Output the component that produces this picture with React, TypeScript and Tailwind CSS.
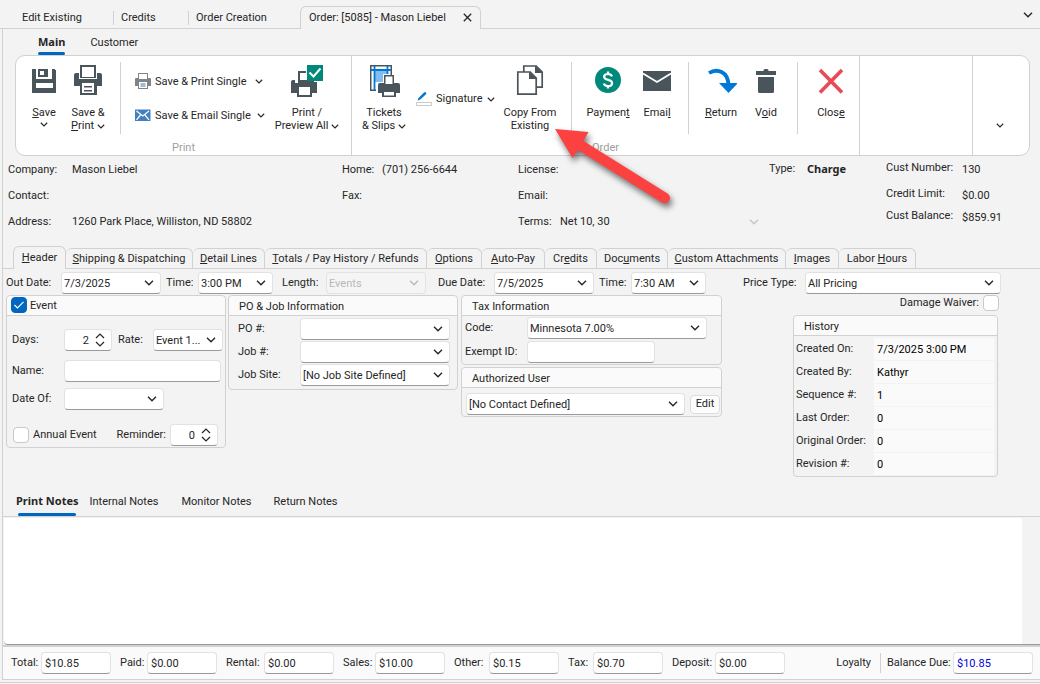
import { useId, useState, type ReactNode } from "react";

const DARK = "#4a545b";

function Chevron({ className = "" }: { className?: string }) {
  return (
    <svg viewBox="0 0 10 6" className={`shrink-0 ${className}`} fill="none" stroke="currentColor" strokeWidth="1.4" aria-hidden>
      <path d="M1 0.8 5 4.8 9 0.8" />
    </svg>
  );
}

/* ---------- ribbon icons ---------- */

function SaveIcon() {
  return (
    <svg width="32" height="32" viewBox="0 0 32 32" aria-hidden>
      <path fill={DARK} d="M4 4h24v24H4z" />
      <path fill="#fff" d="M8 4h16v10H8zM8 18h17v5H8zM27 4h1v1h-1z" />
      <path fill={DARK} d="M10 4h10v8H10z" />
      <path fill="#fff" d="M12 6h4v4h-4z" />
    </svg>
  );
}

function PrinterIcon() {
  return (
    <svg width="32" height="32" viewBox="0 0 32 32" aria-hidden>
      <path fill={DARK} d="M8 0h16v8h4a2 2 0 0 1 2 2v11h-5v9H8v-9H2V10a2 2 0 0 1 2-2h4z" />
      <path fill="#fff" d="M10 2h12v10H10zM10 18h12v10H10zM7 8h1v5h16V8h1v6H7z" />
      <path fill={DARK} d="M12 21h8v1.600h-8zM12 25h8v1.600h-8z" />
    </svg>
  );
}

function PrintPreviewIcon() {
  return (
    <svg width="32" height="32" viewBox="0 0 32 32" aria-hidden>
      <path fill={DARK} d="M7 6h8v2H9v7h14v2h3v11h-5v4H6v-4H0V17a2 2 0 0 1 2-2h2v3h3z" />
      <path fill="#fff" d="M8 22h11v8H8z" />
      <path fill="#00897a" d="M16 0h16v16H16z" />
      <path stroke="#fff" strokeWidth="2" fill="none" d="m18.500 7.500 4 4 7-8" />
    </svg>
  );
}

function TicketsIcon() {
  return (
    <svg width="32" height="32" viewBox="0 0 32 32" aria-hidden>
      <path fill={DARK} d="M2 0h22v10h-1.500V1.500h-19v23H8V26H2z" />
      <path fill="#83bdee" d="M7 6h12v3h-4v8H7z" />
      <path stroke="#0078d7" strokeWidth="1.800" fill="none" d="M3 5h20M6.500 1v24M19.500 1v8" />
      <path fill={DARK} d="M16 10h10v8h4a2 2 0 0 1 2 2v8h-4v4H14v-4h-4v-8a2 2 0 0 1 2-2h4z" />
      <path fill="#fff" d="M17.500 11.500h7V19h-7zM16 27h10v3.500H16z" />
    </svg>
  );
}

function CopyIcon() {
  return (
    <svg width="32" height="32" viewBox="0 0 32 32" aria-hidden>
      <g fill="#fff" stroke={DARK} strokeWidth="1.700">
        <path d="M9.800 1h12.400l6 6v15.200H9.800z" />
        <path d="M3.800 7h12.400l6 6v16.200H3.800z" />
      </g>
      <path fill={DARK} d="M15 6.500 22.800 14H15zM21 .500 28.800 8H21z" />
    </svg>
  );
}

function PaymentIcon() {
  return (
    <svg width="32" height="32" viewBox="0 0 32 32" aria-hidden>
      <circle cx="16" cy="15" r="13" fill="#00897a" />
      <path
        fill="none"
        stroke="#fff"
        strokeWidth="2.200"
        d="M20 11.300c-.6-1.500-2-2.300-4-2.300-2.300 0-3.900 1-3.900 2.800 0 4.200 8 2 8 6.200 0 2-1.700 3.100-4.100 3.100-2.200 0-3.700-.9-4.200-2.600M16 6.500V9m0 12v2.500"
      />
    </svg>
  );
}

function EnvelopeIcon() {
  return (
    <svg width="32" height="32" viewBox="0 0 32 32" aria-hidden>
      <path fill={DARK} d="M2 6h28v20H2z" />
      <path fill="none" stroke="#fff" strokeWidth="1.800" d="m2 8.500 14 8.500 14-8.500" />
    </svg>
  );
}

function ReturnIcon() {
  return (
    <svg width="32" height="32" viewBox="0 0 32 32" aria-hidden>
      <path fill="none" stroke="#0078d7" strokeWidth="3.800" d="M4 8C12 3 23 6.500 23.500 20" />
      <path fill="#0078d7" d="M14 18h19L23.500 28z" />
    </svg>
  );
}

function TrashIcon() {
  return (
    <svg width="32" height="32" viewBox="0 0 32 32" aria-hidden>
      <path fill={DARK} d="M6 6h7.500V5.500a1.500 1.500 0 0 1 1.500-1.500h2a1.500 1.500 0 0 1 1.500 1.500V6H26v4H6zM8 12h16v14.500a1.500 1.500 0 0 1-1.500 1.500h-13A1.500 1.500 0 0 1 8 26.500z" />
    </svg>
  );
}

function CloseIcon() {
  return (
    <svg width="32" height="32" viewBox="0 0 32 32" aria-hidden>
      <path stroke="#e84a57" strokeWidth="3.600" d="m5 5 22 22.500M27 5 5 27.500" />
    </svg>
  );
}

function SmallPrinterIcon() {
  return (
    <svg width="16" height="16" viewBox="0 0 16 16" aria-hidden>
      <path fill="#7f8487" d="M3 0h10v5h2a1 1 0 0 1 1 1v7h-3v3H3v-3H0V6a1 1 0 0 1 1-1h2z" />
      <path fill="#fff" d="M4 1h8v5H4zM4 9h8v6H4z" />
      <path fill="#3f78b5" d="M5.500 10.500h5v1h-5zM5.500 12.500h5v1h-5z" />
    </svg>
  );
}

function SmallMailIcon() {
  return (
    <svg width="16" height="16" viewBox="0 0 16 16" aria-hidden>
      <path fill="#4480bf" d="M0 2.500h15.500v11.500H0z" />
      <path fill="none" stroke="#fff" strokeWidth="1.200" d="m1.500 4 6.300 5L14 4M1.500 12.800 5.500 8M14 12.800 10 8" />
    </svg>
  );
}

function PenIcon() {
  return (
    <svg width="16" height="16" viewBox="0 0 16 16" aria-hidden>
      <path fill="#0078d7" d="M1.500 9.500 2.500 7 8 1.500a1.300 1.300 0 0 1 2 1.800L4 8.800z" />
      <path fill="none" stroke="#c8c8c8" d="M.5 11.500h15v3H.5z" />
    </svg>
  );
}

/* ---------- ribbon ---------- */

function BigButton({ icon, className, children }: { icon: ReactNode; className: string; children: ReactNode }) {
  return (
    <button type="button" className={`flex shrink-0 flex-col items-center gap-[9px] pt-2 text-center leading-[13px] ${className}`}>
      {icon}
      <span>{children}</span>
    </button>
  );
}

function Divider() {
  return <span className="mt-[5px] h-[72px] w-px shrink-0 self-start bg-[#d1d1d1]" />;
}

function RibbonGroup({ caption, children }: { caption: string; children: ReactNode }) {
  return (
    <div className="flex shrink-0 flex-col border-r border-[#d1d1d1]">
      <div className="flex h-[85px] px-1 pt-px">{children}</div>
      <span className="text-center leading-[13px] text-[#a0a0a0]">{caption}</span>
    </div>
  );
}

function Ribbon() {
  return (
    <div className="mr-[10px] ml-3 flex h-[101px] rounded-[10px] border border-[#d1d1d1] bg-white">
      <RibbonGroup caption="Print">
        <BigButton icon={<SaveIcon />} className="w-12">
          <u>S</u>ave
          <Chevron className="mx-auto mt-[3px] h-[5px] w-2" />
        </BigButton>
        <BigButton icon={<PrinterIcon />} className="w-10 whitespace-nowrap">
          Save &amp;
          <br />
          <u>P</u>rint <Chevron className="inline h-[5px] w-2" />
        </BigButton>
        <span className="w-3" />
        <Divider />
        <div className="flex w-[148px] flex-col justify-start gap-[18px] pt-4 pl-[14px]">
          <button type="button" className="flex h-4 items-center gap-1 whitespace-nowrap">
            <SmallPrinterIcon /> <span className="pt-px">Save &amp; Print Single</span>
            <Chevron className="mr-[6px] ml-auto h-[5px] w-2" />
          </button>
          <button type="button" className="flex h-4 items-center gap-1 whitespace-nowrap">
            <SmallMailIcon /> <span className="pt-px">Save &amp; Email Single</span>
            <Chevron className="mr-1 ml-auto h-[5px] w-2" />
          </button>
        </div>
        <BigButton icon={<PrintPreviewIcon />} className="ml-px mr-[3px] w-[74px] whitespace-nowrap">
          Print /<br />
          Preview All <Chevron className="inline h-[5px] w-2" />
        </BigButton>
      </RibbonGroup>

      <RibbonGroup caption="Order">
        <BigButton icon={<TicketsIcon />} className="w-[56px] whitespace-nowrap">
          Tickets
          <br />
          &amp; Slips <Chevron className="inline h-[5px] w-2" />
        </BigButton>
        <button type="button" className="mt-[34px] ml-1 flex h-4 w-[79px] items-center gap-1">
          <PenIcon /> Signature <Chevron className="ml-auto h-[5px] w-2" />
        </button>
        <BigButton icon={<CopyIcon />} className="ml-px w-[68px]">
          Copy From Existing
        </BigButton>
        <span className="w-[7px]" />
        <Divider />
        <BigButton icon={<PaymentIcon />} className="ml-2 w-[56px]">
          Paymen<u>t</u>
        </BigButton>
        <BigButton icon={<EnvelopeIcon />} className="mr-[10px] w-[42px]">
          Emai<u>l</u>
        </BigButton>
        <Divider />
        <BigButton icon={<ReturnIcon />} className="ml-2 w-[48px]">
          <u>R</u>eturn
        </BigButton>
        <BigButton icon={<TrashIcon />} className="mr-[10px] w-[42px]">
          V<u>o</u>id
        </BigButton>
        <Divider />
        <BigButton icon={<CloseIcon />} className="ml-[9px] w-[48px]">
          Clos<u>e</u>
        </BigButton>
      </RibbonGroup>

      <div className="flex-1 border-r border-[#d1d1d1]" />
      <button type="button" aria-label="Expand ribbon" className="flex w-14 shrink-0 items-center justify-center pt-10 pr-[2px]">
        <Chevron className="h-[5px] w-2" />
      </button>
    </div>
  );
}

/* ---------- form controls ---------- */

const FIELD = "h-[22px] w-full rounded-[4px] border border-[#e2e2e2] border-b-[#9a9a9a] bg-white pt-px";

function Combo({
  label,
  value,
  className,
  labelClass = "",
  hideLabel,
  disabled,
}: {
  label: string;
  value: string;
  className: string;
  labelClass?: string;
  hideLabel?: boolean;
  disabled?: boolean;
}) {
  const id = useId();
  return (
    <div className="flex shrink-0 items-center">
      {!hideLabel && (
        <label htmlFor={id} className={`whitespace-nowrap ${labelClass}`}>
          {label}
        </label>
      )}
      <span className={`relative ${className}`}>
        <select
          id={id}
          disabled={disabled}
          aria-label={hideLabel ? label : undefined}
          className={`appearance-none truncate pr-[18px] pl-[2px] ${FIELD} disabled:border-[#e2e2e2] disabled:bg-[#f5f5f5] disabled:text-[#b8b8b8]`}
        >
          <option>{value}</option>
        </select>
        <Chevron className={`pointer-events-none absolute top-2 right-[7px] h-[6px] w-[10px] ${disabled ? "text-[#b8b8b8]" : ""}`} />
      </span>
    </div>
  );
}

function Text({ label, value, className, labelClass }: { label: string; value: string; className: string; labelClass: string }) {
  const id = useId();
  return (
    <div className="flex shrink-0 items-center">
      <label htmlFor={id} className={`whitespace-nowrap ${labelClass}`}>
        {label}
      </label>
      <span className={className}>
        <input id={id} defaultValue={value} className={`px-[3px] ${FIELD}`} />
      </span>
    </div>
  );
}

function Spinner({ label, value, labelClass }: { label: string; value: string; labelClass: string }) {
  const id = useId();
  return (
    <div className="flex shrink-0 items-center">
      <label htmlFor={id} className={`whitespace-nowrap ${labelClass}`}>
        {label}
      </label>
      <span className="relative w-12">
        <input id={id} defaultValue={value} className={`pr-[22px] text-right ${FIELD}`} />
        <svg viewBox="0 0 10 14" className="pointer-events-none absolute top-1 right-[7px] h-[14px] w-[10px]" fill="none" stroke="currentColor" strokeWidth="1.200" aria-hidden>
          <path d="M1 5 5 1l4 4M1 9l4 4 4-4" />
        </svg>
      </span>
    </div>
  );
}

const BOX =
  "size-4 shrink-0 appearance-none rounded-[4px] border border-[#c9c9c9] bg-white checked:border-[#0067c0] checked:bg-[#0067c0]";

function Panel({ title, className, children }: { title: ReactNode; className: string; children: ReactNode }) {
  return (
    <section className={`rounded-[4px] border border-[#d1d1d1] ${className}`}>
      <div className="flex h-5 items-center rounded-t-[4px] border-b border-[#d1d1d1] bg-[#fafafa]">{title}</div>
      {children}
    </section>
  );
}

function PanelTitle({ children }: { children: ReactNode }) {
  return <h3 className="pt-[2px] pl-[10px]">{children}</h3>;
}

/* ---------- sections ---------- */

function DocumentTabs() {
  return (
    <nav className="flex h-[29px] items-end border-b border-[#d1d1d1] pl-[14px]">
      <button type="button" className="mb-[3px] h-[14px] w-[100px] border-r border-[#d1d1d1] pl-2 text-left">Edit Existing</button>
      <button type="button" className="mb-[3px] h-[14px] w-[75px] border-r border-[#d1d1d1] pl-[7px] text-left">Credits</button>
      <button type="button" className="mb-[3px] h-[14px] w-[111px] pl-[7px] text-left">Order Creation</button>
      <div className="-mb-px flex h-[23px] w-[181px] items-center justify-between rounded-t-[6px] border border-b-0 border-[#d1d1d1] bg-[#f3f3f3] pr-2 pb-px pl-2">
        <button type="button" className="pt-px whitespace-nowrap">Order: [5085] - Mason Liebel</button>
        <button type="button" aria-label="Close tab">
          <svg width="9" height="9" viewBox="0 0 9 9" stroke="currentColor" strokeWidth="1.300" aria-hidden>
            <path d="m.8.800 7.400 7.400M8.200.800.800 8.200" />
          </svg>
        </button>
      </div>
      <button type="button" aria-label="Window list" className="mr-[7px] mb-[10px] ml-auto">
        <Chevron className="h-[6px] w-[10px]" />
      </button>
    </nav>
  );
}

function CustomerInfo() {
  return (
    <section className="grid grid-cols-[334fr_176fr_251fr_117fr_154fr] pl-[5px]">
      <dl className="grid auto-rows-[26px] grid-cols-[64px_1fr] items-center pt-px">
        <dt>Company:</dt>
        <dd>Mason Liebel</dd>
        <dt>Contact:</dt>
        <dd />
        <dt>Address:</dt>
        <dd>1260 Park Place, Williston, ND 58802</dd>
      </dl>
      <dl className="grid auto-rows-[26px] grid-cols-[40px_1fr] items-center pt-px">
        <dt>Home:</dt>
        <dd>(701) 256-6644</dd>
        <dt>Fax:</dt>
        <dd />
      </dl>
      <dl className="grid auto-rows-[26px] grid-cols-[42px_1fr] items-center pt-px">
        <dt>License:</dt>
        <dd />
        <dt>Email:</dt>
        <dd />
        <dt>Terms:</dt>
        <dd className="flex items-center justify-between pr-[10px]">
          Net 10, 30 <Chevron className="h-[6px] w-[10px] text-[#c4c4c4]" />
        </dd>
      </dl>
      <dl className="grid auto-rows-[26px] grid-cols-[38px_1fr] items-center">
        <dt>Type:</dt>
        <dd className="font-['Noto_Sans'] font-bold">Charge</dd>
      </dl>
      <dl className="grid grid-cols-[76px_1fr] grid-rows-[24px_28px_16px] items-center">
        <dt>Cust Number:</dt>
        <dd className="pt-[3px]">130</dd>
        <dt>Credit Limit:</dt>
        <dd className="pt-[3px]">$0.00</dd>
        <dt>Cust Balance:</dt>
        <dd className="pt-[3px]">$859.91</dd>
      </dl>
    </section>
  );
}

const PAGES: { key: string; label: ReactNode; width: string }[] = [
  { key: "shipping", label: <><u>S</u>hipping &amp; Dispatching</>, width: "w-[127px]" },
  { key: "detail", label: <><u>D</u>etail Lines</>, width: "w-[72px]" },
  { key: "totals", label: <><u>T</u>otals / Pay History / Refunds</>, width: "w-[162px]" },
  { key: "options", label: <><u>O</u>ptions</>, width: "w-[55px]" },
  { key: "autopay", label: <><u>A</u>uto-Pay</>, width: "w-[63px]" },
  { key: "credits", label: <>Cr<u>e</u>dits</>, width: "w-[52px]" },
  { key: "documents", label: <>Doc<u>u</u>ments</>, width: "w-[71px]" },
  { key: "custom", label: <><u>C</u>ustom Attachments</>, width: "w-[118px]" },
  { key: "images", label: <><u>I</u>mages</>, width: "w-[53px]" },
  { key: "labor", label: <>Labor <u>H</u>ours</>, width: "w-[77px]" },
];

function PageTabs() {
  return (
    <nav className="mt-[11px] flex items-end border-b border-[#d1d1d1] pl-[10px]">
      <button type="button" className="-mb-px h-[23px] w-[53px] shrink-0 rounded-t-[6px] border border-b-0 border-[#d1d1d1] bg-[#f3f3f3]">
        <u>H</u>eader
      </button>
      {PAGES.map((page) => (
        <button
          key={page.key}
          type="button"
          className={`h-5 shrink-0 rounded-t-[6px] border-t border-r border-[#d1d1d1] whitespace-nowrap ${page.width}`}
        >
          {page.label}
        </button>
      ))}
    </nav>
  );
}

function EventPanel() {
  const [enabled, setEnabled] = useState(true);
  const [annual, setAnnual] = useState(false);
  return (
    <Panel
      className="w-[220px] shrink-0 pb-px"
      title={
        <label className="relative flex items-center gap-[3px] pb-px pl-1">
          <input type="checkbox" checked={enabled} onChange={() => setEnabled(!enabled)} className={BOX} />
          {enabled && (
            <svg className="pointer-events-none absolute left-[7px]" width="10" height="8" viewBox="0 0 10 8" fill="none" stroke="#fff" strokeWidth="1.200" aria-hidden>
              <path d="m.5 4 3 3 6-6.200" />
            </svg>
          )}
          <span className="pt-px">Event</span>
        </label>
      }
    >
      <div className="flex gap-[6px] pt-[13px] pl-[5px]">
        <Spinner label="Days:" value="2" labelClass="w-[52px]" />
        <Combo label="Rate:" value="Event 1..." labelClass="w-[35px]" className="w-[70px]" />
      </div>
      <div className="pt-[9px] pl-[5px]">
        <Text label="Name:" value="" labelClass="w-[52px]" className="w-[157px]" />
      </div>
      <div className="pt-[6px] pl-[5px]">
        <Combo label="Date Of:" value="" labelClass="w-[52px]" className="w-[100px]" />
      </div>
      <div className="flex items-center justify-between pt-[14px] pr-[7px] pl-[6px]">
        <label className="flex items-center gap-1">
          <input type="checkbox" checked={annual} onChange={() => setAnnual(!annual)} className={BOX} />
          Annual Event
        </label>
        <Spinner label="Reminder:" value="0" labelClass="pr-1" />
      </div>
    </Panel>
  );
}

const HISTORY = [
  ["Created On:", "7/3/2025 3:00 PM"],
  ["Created By:", "Kathyr"],
  ["Sequence #:", "1"],
  ["Last Order:", "0"],
  ["Original Order:", "0"],
  ["Revision #:", "0"],
];

function HeaderPage() {
  return (
    <div className="flex gap-[21px] pt-[3px] pl-[3px]">
      <div className="flex flex-col gap-px">
        <div className="flex">
          <Combo label="Out Date:" value="7/3/2025" labelClass="w-[55px]" className="mr-[5px] w-[100px]" />
          <Combo label="Time:" value="3:00 PM" labelClass="w-8" className="mr-[9px] w-[75px]" />
          <Combo label="Length:" value="Events" labelClass="w-11" className="mr-3 w-[100px]" disabled />
          <Combo label="Due Date:" value="7/5/2025" labelClass="w-14" className="mr-[5px] w-[100px]" />
          <Combo label="Time:" value="7:30 AM" labelClass="w-8" className="w-[75px]" />
        </div>
        <div className="flex items-start">
          <EventPanel />
          <Panel title={<PanelTitle>PO &amp; Job Information</PanelTitle>} className="ml-[2px] w-[230px] shrink-0 pb-[3px]">
            <div className="flex flex-col gap-px pt-[2px] pl-[9px]">
              <Combo label="PO #:" value="" labelClass="w-[62px]" className="w-[150px]" />
              <Combo label="Job #:" value="" labelClass="w-[62px]" className="w-[150px]" />
              <Combo label="Job Site:" value="[No Job Site Defined]" labelClass="w-[62px]" className="w-[150px]" />
            </div>
          </Panel>
          <div className="ml-[3px] flex w-[261px] shrink-0 flex-col gap-[2px]">
            <Panel title={<PanelTitle>Tax Information</PanelTitle>} className="pb-px">
              <div className="flex flex-col gap-[2px] pt-px pl-[3px]">
                <Combo label="Code:" value="Minnesota 7.00%" labelClass="w-[62px]" className="w-[180px]" />
                <Text label="Exempt ID:" value="" labelClass="w-[62px]" className="w-32" />
              </div>
            </Panel>
            <Panel title={<PanelTitle>Authorized User</PanelTitle>} className="pb-px">
              <div className="flex items-center gap-[5px] pt-[5px] pl-1">
                <Combo label="Authorized user" value="[No Contact Defined]" hideLabel className="w-[219px]" />
                <button type="button" className="h-[19px] w-[30px] rounded-[4px] border border-[#dcdcdc] bg-[#fdfdfd]">
                  Edit
                </button>
              </div>
            </Panel>
          </div>
        </div>
      </div>

      <div className="flex flex-col">
        <Combo label="Price Type:" value="All Pricing" labelClass="w-[62px]" className="w-[196px]" />
        <label className="mt-px mr-[2px] flex items-center justify-end gap-1">
          Damage Waiver:
          <input type="checkbox" className={BOX} />
        </label>
        <Panel title={<PanelTitle>History</PanelTitle>} className="mt-1 mr-[3px] ml-[50px]">
          <dl className="grid auto-rows-[23px] grid-cols-[78px_1fr] pt-[2px] pr-[3px] pl-[2px]">
            {HISTORY.map(([name, value]) => (
              <div key={name} className="contents">
                <dt className="pt-1">{name}</dt>
                <dd className="mb-px bg-[#fafafa] pt-[5px] pl-[3px] text-black">{value}</dd>
              </div>
            ))}
          </dl>
        </Panel>
      </div>
    </div>
  );
}

function Notes() {
  return (
    <section className="mt-[17px] flex flex-1 flex-col">
      <nav className="flex items-start border-b border-[#d1d1d1] pl-[13px]">
        <button type="button" className="mr-[11px] flex h-[22px] flex-col justify-between font-['Noto_Sans'] font-bold">
          Print Notes
          <span className="h-[3px] w-[58px] self-center rounded-full bg-[#0067c0]" />
        </button>
        <button type="button" className="mt-px mr-[23px]">Internal Notes</button>
        <button type="button" className="mt-px mr-[22px]">Monitor Notes</button>
        <button type="button" className="mt-px">Return Notes</button>
      </nav>
      <div className="mt-px ml-px flex min-h-24 flex-1 rounded-bl-[4px] border-b border-[#999] bg-white">
        <textarea aria-label="Print notes" className="flex-1 resize-none bg-transparent p-1 outline-none" />
        <span className="w-[18px] bg-[#f3f3f3]" />
      </div>
    </section>
  );
}

const TOTALS = [
  { label: "Total:", value: "$10.85", labelClass: "w-[30px]" },
  { label: "Paid:", value: "$0.00", labelClass: "w-[27px]" },
  { label: "Rental:", value: "$0.00", labelClass: "w-[38px]" },
  { label: "Sales:", value: "$10.00", labelClass: "w-[32px]" },
  { label: "Other:", value: "$0.15", labelClass: "w-[35px]" },
  { label: "Tax:", value: "$0.70", labelClass: "w-[25px]" },
  { label: "Deposit:", value: "$0.00", labelClass: "w-[43px]" },
];

function TotalsBar() {
  return (
    <footer className="flex items-center gap-[9px] border-t-2 border-b border-[#d1d1d1] bg-[#fafafa] py-[5px] pr-[7px] pl-2">
      {TOTALS.map((total) => (
        <Text key={total.label} label={total.label} value={total.value} labelClass={total.labelClass} className="w-[70px]" />
      ))}
      <span className="ml-auto">Loyalty</span>
      <span className="-mr-[3px] h-5 w-px bg-[#d1d1d1]" />
      <div className="text-[#0000e0] [&_label]:text-[#262626]">
        <Text label="Balance Due:" value="$10.85" labelClass="w-[66px]" className="w-20" />
      </div>
    </footer>
  );
}

function CalloutArrow() {
  return (
    <svg className="pointer-events-none absolute top-[115px] left-[540px]" width="150" height="100" viewBox="0 0 150 100" aria-hidden>
      <path
        className="drop-shadow-[2px_4px_3px_rgba(0,0,0,0.55)]"
        fill="#fc4141"
        d="M15 14 48.500 17 43.500 26 127.500 78.500A5.200 5.200 0 0 1 122 87.500L38 35 32.500 43z"
      />
    </svg>
  );
}

export default function App() {
  return (
    <div className="relative flex min-h-screen flex-col overflow-x-hidden bg-[#f3f3f3] pb-[1px] font-['Roboto','Noto_Sans',sans-serif] text-[11px] leading-[14px] text-[#262626]">
      <DocumentTabs />
      <main className="ml-[2px] flex flex-1 flex-col border-l border-[#d1d1d1]">
        <nav className="flex items-start pt-[6px] pl-[35px]">
          <button type="button" className="flex h-5 flex-col justify-between font-['Noto_Sans'] font-bold">
            Main
            <span className="h-[3px] w-full rounded-full bg-[#0067c0]" />
          </button>
          <button type="button" className="mt-px ml-[25px]">Customer</button>
        </nav>
        <Ribbon />
        <CustomerInfo />
        <PageTabs />
        <HeaderPage />
        <Notes />
        <TotalsBar />
      </main>
      <div className="mt-[2px] h-px bg-[#d1d1d1]" />
      <CalloutArrow />
    </div>
  );
}
